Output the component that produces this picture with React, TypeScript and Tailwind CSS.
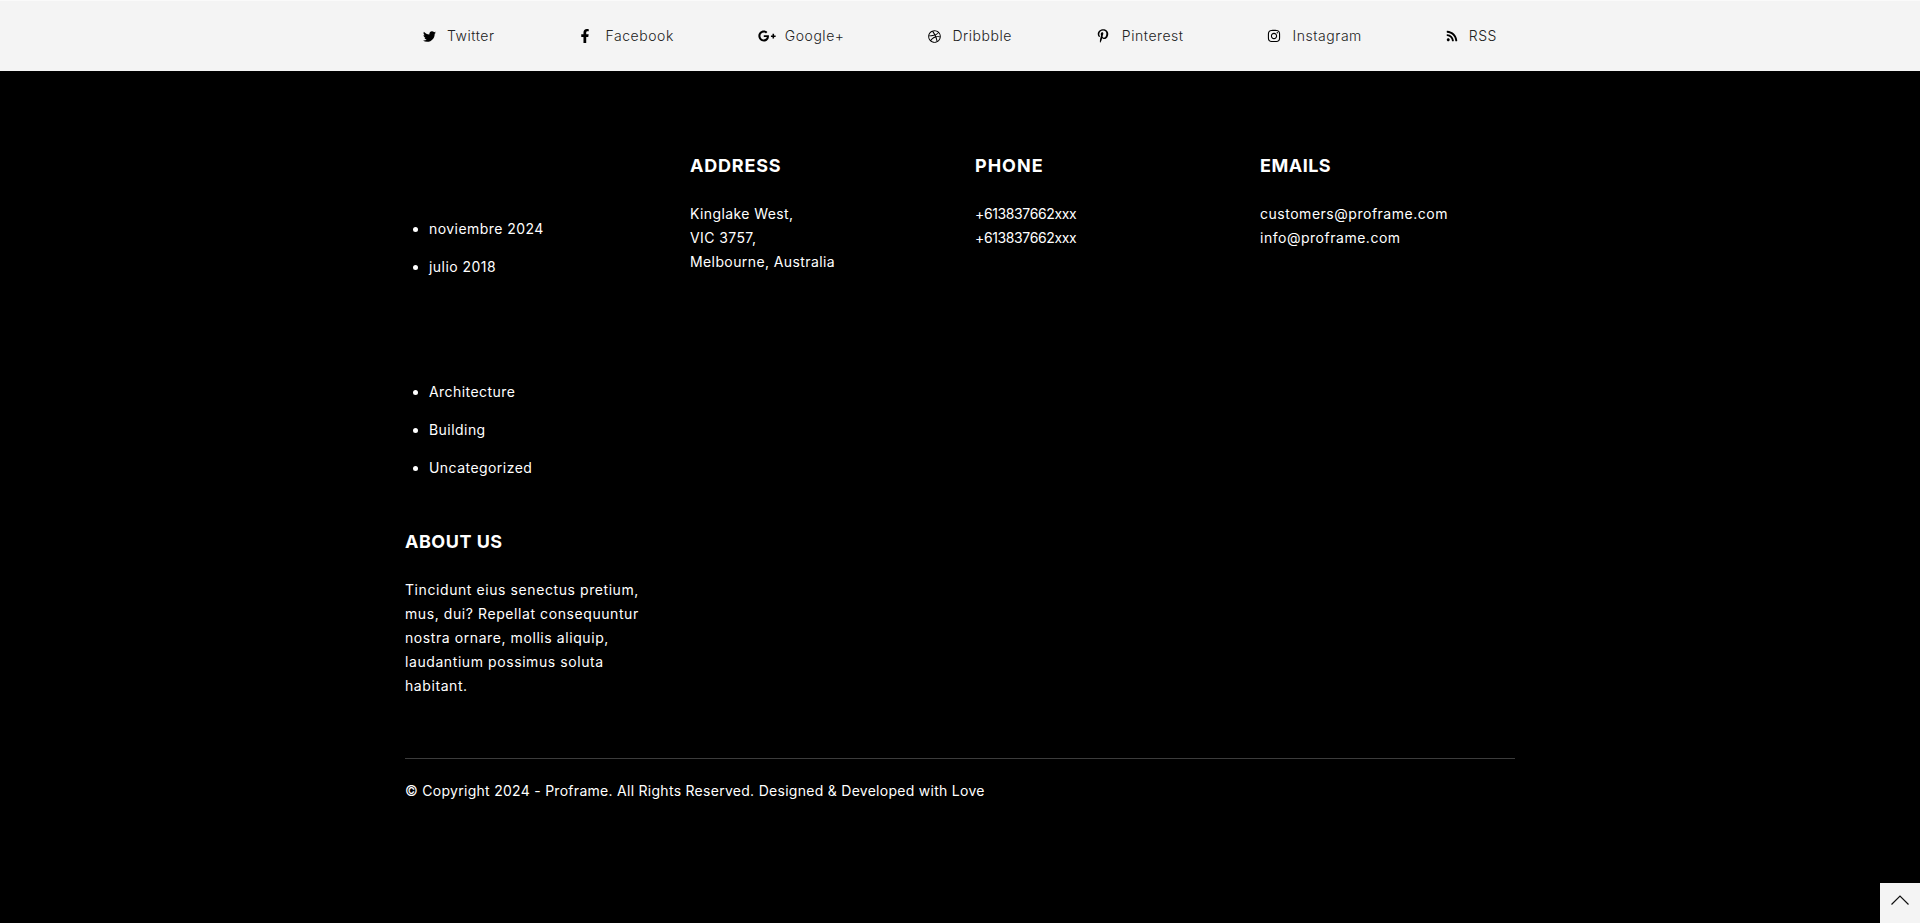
import React from "react";
import { FaTwitter, FaFacebookF, FaGooglePlusG, FaDribbble, FaPinterestP, FaInstagram, FaRss } from "react-icons/fa";

const socials = [
  { name: "Twitter", icon: <FaTwitter className="w-[13px] h-[13px]" />, gap: "gap-[11px]" },
  { name: "Facebook", icon: <FaFacebookF className="w-auto h-[14px]" />, gap: "gap-[13px]" },
  { name: "Google+", icon: <FaGooglePlusG className="w-[18px] h-[18px]" />, gap: "gap-[9px]" },
  { name: "Dribbble", icon: <FaDribbble className="w-[13px] h-[13px]" />, gap: "gap-[11px]" },
  { name: "Pinterest", icon: <FaPinterestP className="w-auto h-[14px]" />, gap: "gap-[12px]" },
  { name: "Instagram", icon: <FaInstagram className="w-[14px] h-[14px]" />, gap: "gap-[11px]" },
  { name: "RSS", icon: <FaRss className="w-[12px] h-[12px]" />, gap: "gap-[11px]" },
];

const BulletList = ({ items, className }: { items: string[]; className?: string }) => (
  <ul className={className}>
    {items.map((item) => (
      <li key={item} className="flex items-center h-[24px] mb-[14px] tracking-[0.45px]">
        <span className="w-[5px] h-[5px] rounded-full bg-white ml-[8px] mr-[11px]" />
        {item}
      </li>
    ))}
  </ul>
);

const Heading = ({ children, className }: { children: React.ReactNode; className: string }) => (
  <h4 className={`text-[18px] leading-[27px] font-bold mb-[23px] ${className}`}>{children}</h4>
);

export default function App() {
  return (
    <div className="relative h-[923px] overflow-hidden bg-black text-white font-['Inter',sans-serif] text-[14px] leading-[24px] tracking-[0.4px]">
      <div className="h-[71px] bg-[#f4f4f4] border-t border-[#fafafa] flex justify-center">
        <div className="w-[1110px] px-[18px] flex items-center justify-between font-light text-[#222] tracking-[0.55px]">
          {socials.map((s) => (
            <a key={s.name} className={`flex items-center ${s.gap}`}>
              <span className="text-black">{s.icon}</span>
              {s.name}
            </a>
          ))}
        </div>
      </div>

      <div className="w-[1110px] mx-auto">
        <div className="grid grid-cols-4 gap-x-[30px] pt-[81px]">
          <div>
            <BulletList className="pt-[65px]" items={["noviembre 2024", "julio 2018"]} />
            <BulletList className="pt-[87px]" items={["Architecture", "Building", "Uncategorized"]} />
            <div className="pt-[34px]">
              <Heading className="tracking-[0.5px]">ABOUT US</Heading>
              <p className="tracking-[0.58px]">
                Tincidunt eius senectus pretium,
                <br />
                mus, dui? Repellat consequuntur
                <br />
                nostra ornare, mollis aliquip,
                <br />
                laudantium possimus soluta
                <br />
                habitant.
              </p>
            </div>
          </div>
          <div>
            <Heading className="tracking-[0.8px]">ADDRESS</Heading>
            <p>
              Kinglake West,
              <br />
              VIC 3757,
              <br />
              Melbourne, Australia
            </p>
          </div>
          <div>
            <Heading className="tracking-[1px]">PHONE</Heading>
            <p className="tracking-[-0.38px]">
              +613837662xxx
              <br />
              +613837662xxx
            </p>
          </div>
          <div>
            <Heading className="tracking-[0.5px]">EMAILS</Heading>
            <p className="tracking-[0.52px]">
              customers@proframe.com
              <br />
              info@proframe.com
            </p>
          </div>
        </div>

        <div className="mt-[60px] border-t border-[#3c3c3c] pt-[20px] tracking-[0.28px]">
          © Copyright 2024 - Proframe. All Rights Reserved. Designed &amp; Developed with Love
        </div>
      </div>

      <button className="absolute right-0 bottom-0 w-[40px] h-[40px] bg-[#f4f4f4] flex items-start justify-center pt-[12px]">
        <svg width="20" height="10" viewBox="0 0 20 10" fill="none" stroke="#111" strokeWidth="1.2">
          <path d="M1.5 9.5 L10 1 L18.5 9.5" />
        </svg>
      </button>
    </div>
  );
}
